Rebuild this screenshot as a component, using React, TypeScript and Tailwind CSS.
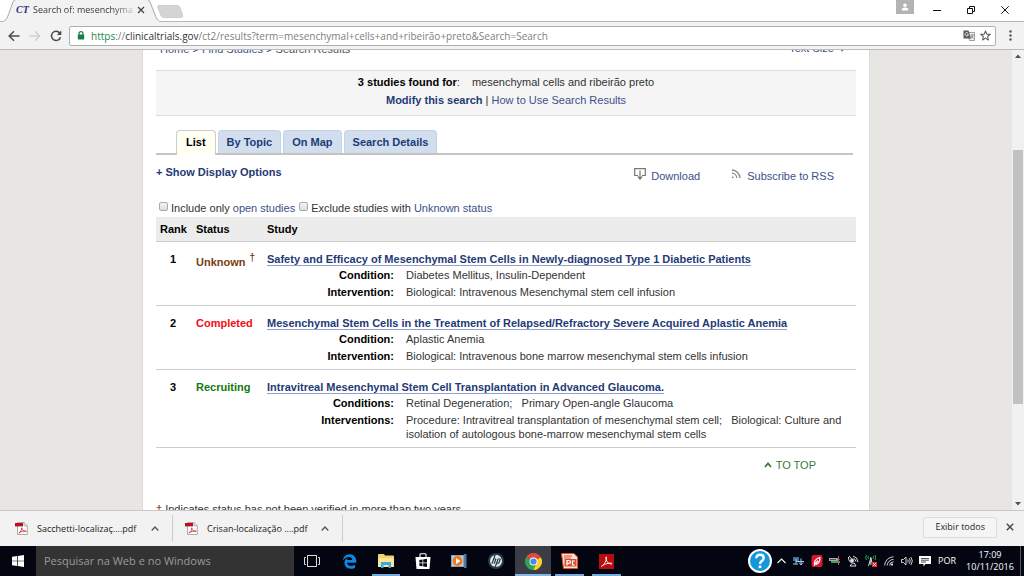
import type { ReactNode } from 'react';
import { FaEdgeLegacy } from 'react-icons/fa';
import { SiHp } from 'react-icons/si';

type Detail = { label: string; value: string };
type Study = {
  rank: number;
  status: string;
  tone: string;
  dagger?: boolean;
  title: string;
  details: Detail[];
};

const studies: Study[] = [
  {
    rank: 1,
    status: 'Unknown',
    tone: 'leading-[22px] text-[#7a4010]',
    dagger: true,
    title: 'Safety and Efficacy of Mesenchymal Stem Cells in Newly-diagnosed Type 1 Diabetic Patients',
    details: [
      { label: 'Condition:', value: 'Diabetes Mellitus, Insulin-Dependent' },
      { label: 'Intervention:', value: 'Biological: Intravenous Mesenchymal stem cell infusion' },
    ],
  },
  {
    rank: 2,
    status: 'Completed',
    tone: 'leading-4 text-[#f50a14]',
    title: 'Mesenchymal Stem Cells in the Treatment of Relapsed/Refractory Severe Acquired Aplastic Anemia',
    details: [
      { label: 'Condition:', value: 'Aplastic Anemia' },
      { label: 'Intervention:', value: 'Biological: Intravenous bone marrow mesenchymal stem cells infusion' },
    ],
  },
  {
    rank: 3,
    status: 'Recruiting',
    tone: 'leading-4 text-[#117a11]',
    title: 'Intravitreal Mesenchymal Stem Cell Transplantation in Advanced Glaucoma.',
    details: [
      { label: 'Conditions:', value: 'Retinal Degeneration;\u00a0\u00a0 Primary Open-angle Glaucoma' },
      {
        label: 'Interventions:',
        value:
          'Procedure: Intravitreal transplantation of mesenchymal stem cell;\u00a0\u00a0 Biological: Culture and isolation of autologous bone-marrow mesenchymal stem cells',
      },
    ],
  },
];

function TabStrip() {
  return (
    <header className="flex h-[22px] shrink-0 items-end border-b border-[#b8b8b8] bg-white">
      <div className="relative ml-1 flex h-[22px] w-[155px] shrink-0 items-center">
        <svg className="absolute left-0 top-0 h-[23px] w-[155px]" viewBox="0 0 155 23" aria-hidden="true">
          <path d="M0 21.5 C2 21 2.500 20 3.500 18 L9 3 Q10 .5 12 .5 H143 Q145 .5 146 3 L152 18 Q153 21 155 21.500 V23 H0 Z" fill="#f2f2f2" />
          <path d="M0 21.5 C2 21 2.500 20 3.500 18 L9 3 Q10 .5 12 .5 H143 Q145 .5 146 3 L152 18 Q153 21 155 21.500" fill="none" stroke="#a9a9a9" />
        </svg>
        <div className="relative flex w-full items-center pl-3">
          <span className="w-[17px] font-['Liberation_Serif',serif] text-[10px] font-bold italic leading-4 text-[#2a2f86]">CT</span>
          <span className="w-[100px] whitespace-nowrap bg-linear-to-r from-[#333] from-80% to-[#ccc] bg-clip-text text-[9px] leading-4 text-transparent">
            Search of: mesenchymal
          </span>
          <button type="button" aria-label="Close tab" className="flex size-4 items-center justify-center">
            <svg viewBox="0 0 8 8" className="size-2" aria-hidden="true">
              <path d="M1 1 L7 7 M7 1 L1 7" stroke="#444" strokeWidth="1.3" />
            </svg>
          </button>
        </div>
      </div>
      <button type="button" aria-label="New tab" className="-ml-[2px] mb-[3px] flex h-[13px] items-center">
        <svg viewBox="0 0 27 13" className="h-[13px] w-[27px]" aria-hidden="true">
          <path d="M1.500 .5 H20 Q22 .5 23 2.500 L25.500 10 Q26.500 12.500 24 12.500 H7 Q5 12.500 4 10.500 L.8 2.500 Q.2 .5 1.500 .5Z" fill="#d4d4d4" stroke="#cfcfcf" />
        </svg>
      </button>
      <div className="ml-auto flex h-full items-start">
        <button type="button" aria-label="User profile" className="mr-[11px] flex h-[14px] w-[18px] items-center justify-center bg-[#b3b3b3]">
          <svg viewBox="0 0 8 8" className="size-2" fill="#fff" aria-hidden="true">
            <circle cx="4" cy="2.200" r="1.800" />
            <path d="M.8 7.500 V6.500 Q.8 4.600 4 4.600 Q7.200 4.600 7.200 6.500 V7.500Z" />
          </svg>
        </button>
        <button type="button" aria-label="Minimize" className="flex h-5 w-[24px] items-center justify-center">
          <svg viewBox="0 0 8 8" className="size-2" aria-hidden="true"><path d="M0 4.500 H8" stroke="#111" /></svg>
        </button>
        <button type="button" aria-label="Restore" className="flex h-5 w-[44px] items-center justify-center">
          <svg viewBox="0 0 8 8" className="size-2" fill="none" stroke="#111" aria-hidden="true">
            <path d="M.5 2.500 H5.500 V7.500 H.5Z M2.500 2.500 V.5 H7.500 V5.500 H5.500" />
          </svg>
        </button>
        <button type="button" aria-label="Close window" className="mr-[7px] flex h-5 w-[24px] items-center justify-center">
          <svg viewBox="0 0 8 8" className="size-2" aria-hidden="true"><path d="M.3 .3 L7.700 7.700 M7.700 .3 L.3 7.700" stroke="#111" /></svg>
        </button>
      </div>
    </header>
  );
}

function Toolbar() {
  return (
    <nav aria-label="Browser" className="flex h-7 shrink-0 items-center border-b border-[#bbb] bg-[#f2f2f2] pl-[7px] pr-2">
      <button type="button" aria-label="Back" className="flex h-5 w-[14px] items-center justify-center">
        <svg viewBox="0 0 12 12" className="size-3" fill="none" stroke="#4a4a4a" strokeWidth="1.500" aria-hidden="true">
          <path d="M11.500 6 H1.500 M6 1.200 L1.200 6 L6 10.800" />
        </svg>
      </button>
      <button type="button" aria-label="Forward" className="ml-[7px] flex h-5 w-[14px] items-center justify-center">
        <svg viewBox="0 0 12 12" className="size-3" fill="none" stroke="#cfcfcf" strokeWidth="1.300" aria-hidden="true">
          <path d="M.5 6 H10.500 M6 1.200 L10.800 6 L6 10.800" />
        </svg>
      </button>
      <button type="button" aria-label="Reload" className="ml-[7px] flex h-5 w-[14px] items-center justify-center">
        <svg viewBox="0 0 12 12" className="size-3" fill="none" aria-hidden="true">
          <path d="M9.800 3.200 A4.600 4.600 0 1 0 10.500 7.200" stroke="#4a4a4a" strokeWidth="1.500" />
          <path d="M11.300 .6 V5 H6.900Z" fill="#4a4a4a" />
        </svg>
      </button>
      <div className="ml-[6px] flex h-5 min-w-0 flex-1 items-center rounded-[2px] border border-[#b0b0b0] bg-white pl-[7px] pr-[2px]">
        <svg viewBox="0 0 8 9" className="h-[9px] w-2" aria-hidden="true">
          <path d="M2 4 V2.500 Q2 .7 4 .7 Q6 .7 6 2.500 V4" fill="none" stroke="#1a7f45" strokeWidth="1.200" />
          <rect x=".8" y="3.600" width="6.400" height="5" rx=".5" fill="#1a7f45" />
        </svg>
        <p className="ml-[6px] flex-1 truncate text-[10px] leading-4 text-[#808080]">
          <span className="text-[#1a8a4a]">https</span>://<span className="text-[#333]">clinicaltrials.gov</span>
          /ct2/results?term=mesenchymal+cells+and+ribeirão+preto&amp;Search=Search
        </p>
        <button type="button" aria-label="Translate this page" className="flex size-4 items-center justify-center">
          <svg viewBox="0 0 12 11" className="h-[11px] w-3" aria-hidden="true">
            <path d="M5 2.500 H11.500 V10.500 H6.500Z" fill="#f5f5f5" stroke="#888" strokeWidth=".8" />
            <path d="M7.500 5 H10.800 M9.200 4 V5 M10.200 5.200 Q9.500 7.500 7.800 8.500 M8 6 Q9 8 10.600 8.500" fill="none" stroke="#777" strokeWidth=".8" />
            <path d="M.5 .5 H5.500 L8 8.500 H.5Z" fill="#5a5a5a" />
            <path d="M5.200 3.300 A1.700 1.700 0 1 0 5.500 4.700 H4" fill="none" stroke="#fff" strokeWidth=".8" />
          </svg>
        </button>
        <button type="button" aria-label="Bookmark this page" className="flex size-4 items-center justify-center">
          <svg viewBox="0 0 12 12" className="size-[11px]" fill="none" stroke="#555" strokeWidth="1.100" strokeLinejoin="round" aria-hidden="true">
            <path d="M6 1 L7.400 4.500 L11.200 4.700 L8.300 7.100 L9.200 10.900 L6 8.800 L2.800 10.900 L3.700 7.100 L.8 4.700 L4.600 4.500Z" />
          </svg>
        </button>
      </div>
      <button type="button" aria-label="Menu" className="ml-2 flex h-5 w-3 items-center justify-center">
        <svg viewBox="0 0 3 11" className="h-[11px] w-[3px]" fill="#555" aria-hidden="true">
          <circle cx="1.500" cy="1.500" r="1.200" /><circle cx="1.500" cy="5.500" r="1.200" /><circle cx="1.500" cy="9.500" r="1.200" />
        </svg>
      </button>
    </nav>
  );
}

function StudyRow({ study }: { study: Study }) {
  return (
    <tr className="border-b border-[#ccc] align-top">
      <td className="pr-[6px] pt-[9px] text-center font-bold leading-4 text-black">{study.rank}</td>
      <td className={`pt-[9px] font-bold ${study.tone}`}>
        {study.status}
        {study.dagger && <sup className="ml-1 text-[10px]">†</sup>}
      </td>
      <td className="pb-[6px] pt-[9px]">
        <h2 className="leading-4">
          <a href="#study" className="border-b border-[#8fa3cc] font-bold text-[#1f3a76]">{study.title}</a>
        </h2>
        <dl className="mt-px grid grid-cols-[127px_1fr] gap-x-3 gap-y-[3px] pr-2 leading-[14px]">
          {study.details.map((d) => (
            <div key={d.label} className="contents">
              <dt className="text-right font-bold text-black">{d.label}</dt>
              <dd>{d.value}</dd>
            </div>
          ))}
        </dl>
      </td>
    </tr>
  );
}

function ResultsPage() {
  const link = 'text-[#3d4f8a]';
  const tab = 'flex h-[23px] items-center rounded-t border border-b-0 border-[#c5d3e4] bg-[#d0deee] px-2 font-bold text-[#1f3a76]';
  const checkbox = 'mb-[3px] size-[9px] appearance-none rounded-[2px] border border-[#aaa] bg-linear-to-b from-[#f4f4f4] to-[#ddd]';
  return (
    <div className="mx-auto w-full max-w-[728px] border-x border-[#dcdcda] bg-white px-[13px] font-['Liberation_Sans',Arial,sans-serif] text-[11px] text-[#333]">
      <div className="-mt-[9px] flex h-4 items-center justify-between pl-1 pr-3 leading-4">
        <p className={link}>
          <a href="#home">Home</a> &gt; <a href="#find">Find Studies</a> &gt; <span className="text-[#555]">Search Results</span>
        </p>
        <a href="#text-size" className={link}>Text Size&nbsp; <span className="text-[8px]">▾</span></a>
      </div>

      <section className="mt-[13px] border-y border-[#dedede] bg-[#f5f5f5] pb-[6px] pt-[2px] text-center leading-[18px]">
        <p><b className="text-black">3 studies found for</b>:<span className="ml-3">mesenchymal cells and ribeirão preto</span></p>
        <p>
          <a href="#modify" className="font-bold text-[#1f3a76]">Modify this search</a> | <a href="#how" className={link}>How to Use Search Results</a>
        </p>
      </section>

      <nav aria-label="Result views" className="mr-[3px] mt-[14px] flex gap-[2px] border-b-2 border-[#c4c4c4] pl-5">
        <a href="#list" className="-mb-[2px] flex h-[25px] items-center rounded-t border border-b-0 border-[#ccc] bg-[#fffff3] px-[9px] pb-[2px] font-bold text-black">List</a>
        <a href="#topic" className={tab}>By Topic</a>
        <a href="#map" className={tab}>On Map</a>
        <a href="#details" className={tab}>Search Details</a>
      </nav>

      <div className="flex h-[45px] items-start justify-between pr-[22px] leading-4">
        <button type="button" className="mt-[9px] font-bold text-[#1f3a76]">+ Show Display Options</button>
        <div className="mt-[13px] flex gap-[31px]">
          <a href="#download" className={`flex items-center gap-[5px] ${link}`}>
            <svg viewBox="0 0 12 12" className="-mt-1 size-3" fill="none" stroke="#777" strokeWidth="1.200" aria-hidden="true">
              <path d="M4 7.500 H.7 V.7 H11.300 V7.500 H8 M6 2.500 V10.500 M3.800 8.500 L6 11 L8.200 8.500" />
            </svg>
            Download
          </a>
          <a href="#rss" className={`flex items-center gap-[6px] ${link}`}>
            <svg viewBox="0 0 10 10" className="-mt-1 size-[10px]" fill="none" stroke="#888" strokeWidth="1.300" aria-hidden="true">
              <circle cx="1.700" cy="8.300" r=".9" fill="#888" stroke="none" />
              <path d="M1 4.200 A5 5 0 0 1 5.800 9 M1 1 A8.300 8.300 0 0 1 9 9" />
            </svg>
            Subscribe to RSS
          </a>
        </div>
      </div>

      <div className="flex h-[17px] items-center gap-1 pb-[2px] pl-[3px] leading-4">
        <div className="flex items-center gap-[3px]">
          <input id="open-only" type="checkbox" className={checkbox} />
          <label htmlFor="open-only">Include only <a href="#open" className={link}>open studies</a></label>
        </div>
        <div className="flex items-center gap-[3px]">
          <input id="no-unknown" type="checkbox" className={checkbox} />
          <label htmlFor="no-unknown">Exclude studies with <a href="#unknown" className={link}>Unknown status</a></label>
        </div>
      </div>

      <table className="w-full table-fixed border-collapse text-left">
        <colgroup>
          <col className="w-[40px]" />
          <col className="w-[71px]" />
          <col />
        </colgroup>
        <thead>
          <tr className="h-6 border-b border-[#ccc] bg-[#ececec] leading-4 text-black">
            <th className="pl-1">Rank</th>
            <th>Status</th>
            <th>Study</th>
          </tr>
        </thead>
        <tbody>
          {studies.map((s) => <StudyRow key={s.rank} study={s} />)}
        </tbody>
      </table>

      <div className="mt-[9px] flex justify-end pr-10 leading-4">
        <a href="#top" className="flex items-center gap-1 text-[#3a7a3a]">
          <svg viewBox="0 0 8 6" className="h-[6px] w-2" fill="none" stroke="#3a7a3a" strokeWidth="1.800" aria-hidden="true"><path d="M1 5 L4 1.500 L7 5" /></svg>
          TO TOP
        </a>
      </div>
      <p className="mt-7 leading-4"><span className="text-[#7a4010]">†</span> Indicates status has not been verified in more than two years</p>
    </div>
  );
}

function Scrollbar() {
  return (
    <div className="flex w-3 shrink-0 flex-col items-center bg-[#f1f1f1] py-1" aria-hidden="true">
      <svg viewBox="0 0 6 4" className="h-1 w-[6px] shrink-0" fill="#505050"><path d="M0 4 L3 .5 L6 4Z" /></svg>
      <div className="flex w-[10px] flex-1 flex-col">
        <div className="flex-[92]" />
        <div className="flex-[254] bg-[#c1c1c1]" />
        <div className="flex-[98]" />
      </div>
      <svg viewBox="0 0 6 4" className="h-1 w-[6px] shrink-0" fill="#505050"><path d="M0 0 L3 3.500 L6 0Z" /></svg>
    </div>
  );
}

function DownloadItem({ name }: { name: string }) {
  return (
    <div className="flex w-[170px] items-center border-r border-[#ccc] pl-3">
      <svg viewBox="0 0 13 13" className="size-[13px] shrink-0" aria-hidden="true">
        <path d="M2.500 .5 H9 L12.300 3.800 V12.500 H2.500Z" fill="#fff" stroke="#999" strokeWidth=".8" />
        <path d="M9 .5 V3.800 H12.300" fill="none" stroke="#999" strokeWidth=".8" />
        <rect x="0" y="1" width="8" height="3.400" fill="#b3141c" />
        <path d="M3.800 11 C6 9.500 7 7.500 6.800 5.800 C6.500 8 9 9.500 11.300 9.300 C9 8.600 6 9.500 3.800 11Z" fill="none" stroke="#d3303a" strokeWidth=".9" />
      </svg>
      <a href="#file" className="ml-[9px] w-[110px] whitespace-nowrap text-[9px] leading-4 text-[#222]">{name}</a>
      <button type="button" aria-label={`Options for ${name}`} className="flex h-6 w-4 items-center justify-center">
        <svg viewBox="0 0 8 5" className="h-[5px] w-2" fill="none" stroke="#555" strokeWidth="1.300" aria-hidden="true"><path d="M.7 4.500 L4 1 L7.300 4.500" /></svg>
      </button>
    </div>
  );
}

function DownloadBar() {
  return (
    <footer className="flex h-9 shrink-0 items-stretch border-t border-[#c8c8c8] bg-[#f2f2f2] py-1 pl-[3px] pr-[6px]">
      <DownloadItem name="Sacchetti-localizaç....pdf" />
      <DownloadItem name="Crisan-localização ....pdf" />
      <div className="mb-[3px] ml-auto flex items-center gap-[5px]">
        <button type="button" className="h-[21px] rounded-[2px] border border-[#ddd] bg-[#f5f5f5] px-[11px] text-[9px] leading-4 text-[#222]">Exibir todos</button>
        <button type="button" aria-label="Close downloads" className="flex size-4 items-center justify-center">
          <svg viewBox="0 0 8 8" className="size-2" aria-hidden="true"><path d="M.8 .8 L7.200 7.200 M7.200 .8 L.8 7.200" stroke="#444" strokeWidth="1.400" /></svg>
        </button>
      </div>
    </footer>
  );
}

function TaskButton({ label, state = 'idle', children }: { label: string; state?: 'idle' | 'open' | 'active'; children: ReactNode }) {
  const look = {
    idle: '',
    open: 'after:absolute after:inset-x-1 after:bottom-0 after:h-[2px] after:bg-[#76a9dc]',
    active: 'bg-[#3a3d46] after:absolute after:inset-x-0 after:bottom-0 after:h-[2px] after:bg-[#86b6e6]',
  }[state];
  return (
    <button type="button" aria-label={label} className={`relative flex items-center justify-center ${look}`}>
      {children}
    </button>
  );
}

function TrayIcon({ children }: { children: ReactNode }) {
  return <span className="flex w-[18px] items-center justify-center">{children}</span>;
}

function Taskbar() {
  return (
    <footer className="flex h-[30px] shrink-0 items-stretch bg-[#030611] text-white">
      <button type="button" aria-label="Start" className="flex w-9 items-center justify-center">
        <svg viewBox="0 0 12 12" className="size-3" fill="#fff" aria-hidden="true">
          <path d="M0 1.700 L5.200 1 V5.700 H0Z M5.900 .9 L12 0 V5.700 H5.900Z M0 6.300 H5.200 V11 L0 10.300Z M5.900 6.300 H12 V12 L5.900 11.100Z" />
        </svg>
      </button>
      <input aria-label="Pesquisar na Web e no Windows" placeholder="Pesquisar na Web e no Windows" className="w-[258px] bg-[#333334] px-2 text-[11px] text-white placeholder:text-[#9a9a9a]" />
      <div className="grid w-[331px] grid-cols-9">
        <TaskButton label="Task view">
          <svg viewBox="0 0 16 12" className="h-3 w-4" fill="none" stroke="#ddd" aria-hidden="true">
            <path d="M3.500 .5 H12.500 V11.500 H3.500Z M2 2.500 H.5 V9.500 H2 M14 2.500 H15.500 V9.500 H14" />
          </svg>
        </TaskButton>
        <TaskButton label="Edge"><FaEdgeLegacy className="size-[15px] text-[#0f86e0]" /></TaskButton>
        <TaskButton label="File Explorer" state="open">
          <svg viewBox="0 0 16 14" className="h-[14px] w-4" aria-hidden="true">
            <path d="M0 1 Q0 0 1 0 H6 L7 1.500 H15 Q16 1.500 16 2.500 V13 H0Z" fill="#f2d06a" />
            <path d="M0 4 H16 V13 H0Z" fill="#fbe596" />
            <path d="M3 14 V8 H13 V14 H10.500 V11 H5.500 V14Z" fill="#3aa8e0" />
          </svg>
        </TaskButton>
        <TaskButton label="Store">
          <svg viewBox="0 0 16 16" className="size-4" aria-hidden="true">
            <path d="M5 4.500 V1.500 Q5 .7 6 .7 H10 Q11 .7 11 1.500 V4.500" fill="none" stroke="#fff" strokeWidth="1.100" />
            <path d="M.5 4 H15.500 L14.500 16 H1.500Z" fill="#fff" />
            <path d="M4.300 7 L7.500 6.500 V9.600 H4.300Z M8.200 6.400 L12 5.800 V9.600 H8.200Z M4.300 10.200 H7.500 V13.300 L4.300 12.800Z M8.200 10.200 H12 V14 L8.200 13.400Z" fill="#030611" />
          </svg>
        </TaskButton>
        <TaskButton label="Media Player">
          <svg viewBox="0 0 16 14" className="h-[14px] w-4" aria-hidden="true">
            <rect x="0" y="1" width="13" height="12" fill="#7fa6c4" />
            <path d="M13 0 H15.500 V14 H13Z" fill="#4a7ba6" />
            <rect x="1" y="2" width="11" height="10" fill="#b9cfdf" />
            <circle cx="6.500" cy="7" r="5" fill="#ee7a1d" />
            <path d="M5 4 L9.500 7 L5 10Z" fill="#fff" />
          </svg>
        </TaskButton>
        <TaskButton label="HP"><span className="flex size-4 items-center justify-center rounded-full bg-[#2a3a46]"><SiHp className="size-3 text-[#dfe6ea]" /></span></TaskButton>
        <TaskButton label="Chrome" state="active">
          <svg viewBox="0 0 18 18" className="size-[17px]" aria-hidden="true">
            <path d="M9 9 L1.200 4.500 A9 9 0 0 1 16.800 4.500Z" fill="#e04a3a" />
            <path d="M9 9 L16.800 4.500 A9 9 0 0 1 9 18Z" fill="#fbd023" />
            <path d="M9 9 L9 18 A9 9 0 0 1 1.200 4.500Z" fill="#2fa455" />
            <path d="M9 5 H17 L16.800 4.500 H9Z" fill="#e04a3a" />
            <path d="M5.500 11 L9 18 L12.500 11Z" fill="#2fa455" />
            <path d="M12.500 11 L9 18 L12 17.500 L16 10Z" fill="#fbd023" />
            <circle cx="9" cy="9" r="4.200" fill="#fff" />
            <circle cx="9" cy="9" r="3.300" fill="#4788ee" />
          </svg>
        </TaskButton>
        <TaskButton label="PowerPoint" state="open">
          <svg viewBox="0 0 17 16" className="h-4 w-[17px]" fill="none" aria-hidden="true">
            <path d="M.5 .5 H13 L16.500 4 V15.500 H2.500Z" fill="#f7e2d6" stroke="#d9512c" />
            <path d="M3 3 H11 M3 5 H10" stroke="#d9512c" strokeWidth="1.200" />
            <rect x="3.500" y="6" width="12" height="7.500" fill="#d9512c" />
            <path d="M6 12.500 V7.500 H8 Q9.500 7.500 9.500 9 Q9.500 10.300 8 10.300 H6 M13.800 8 H11.500 V12 H13.800" stroke="#fff" strokeWidth="1.200" />
          </svg>
        </TaskButton>
        <TaskButton label="Adobe Reader" state="open">
          <svg viewBox="0 0 15 15" className="size-[15px]" aria-hidden="true">
            <rect width="15" height="15" fill="#b80d10" />
            <path d="M2.500 12.300 C5.500 10.500 8 6 7.300 2.800 C6.500 2.800 7 7 9 8.800 C10.500 10 12.800 10.500 12.900 9.500 C12.800 8.500 6 9.200 2.500 12.300Z" fill="none" stroke="#fff" strokeWidth=".9" />
          </svg>
        </TaskButton>
      </div>

      <div className="ml-auto flex items-stretch">
        <span className="flex w-6 items-center justify-center">
          <svg viewBox="0 0 24 24" className="size-6" aria-hidden="true">
            <circle cx="12" cy="12" r="11" fill="#1597dc" stroke="#fff" strokeWidth="2" />
            <path d="M8.300 9.200 Q8.500 5.800 12 5.800 Q15.700 5.800 15.700 9 Q15.700 10.800 13.800 12 Q12 13.200 12 15" fill="none" stroke="#fff" strokeWidth="2.400" />
            <rect x="10.700" y="16.500" width="2.600" height="2.600" fill="#fff" />
          </svg>
        </span>
        <TrayIcon>
          <svg viewBox="0 0 9 6" className="h-[6px] w-[9px]" fill="none" stroke="#eee" strokeWidth="1.200" aria-hidden="true"><path d="M.5 5 L4.500 1 L8.500 5" /></svg>
        </TrayIcon>
        <TrayIcon>
          <svg viewBox="0 0 12 10" className="h-[10px] w-3" aria-hidden="true">
            <path d="M0 1 H6 V5 H0Z M0 7 H5 V9 H0Z" fill="#3d6f9e" />
            <path d="M3 3 V8 M3 5.500 H11 M8 2.500 V8 M6 6.500 L8 9 L10 6.500" fill="none" stroke="#a9cdea" />
          </svg>
        </TrayIcon>
        <TrayIcon>
          <svg viewBox="0 0 12 12" className="size-3" aria-hidden="true">
            <rect x=".5" width="11" height="12" rx="2" fill="#e0122d" />
            <path d="M3.500 9 Q2.800 4.500 8.800 2.500 Q9.500 8 5 9.500 M3 10.500 L7 5.500" fill="none" stroke="#fff" strokeWidth="1.300" />
          </svg>
        </TrayIcon>
        <TrayIcon>
          <svg viewBox="0 0 12 10" className="h-[10px] w-3" aria-hidden="true">
            <path d="M0 2 H8 L11 3.500 L8 5 H0Z" fill="#a9a9a0" /><path d="M2 5 H11 V7 H2Z" fill="#3f9a65" />
            <path d="M9.500 0 V9" stroke="#d8513c" /><path d="M1 3.500 H7" stroke="#555" />
          </svg>
        </TrayIcon>
        <TrayIcon>
          <svg viewBox="0 0 12 12" className="size-3" fill="none" stroke="#ddd" aria-hidden="true">
            <path d="M2 1 L7 6.500 M1.500 2 Q1 8 8 8.500 M5 8.500 L3 11 H9 L7.500 8.500 M6 1 Q10.500 2 11 7 M6.500 3.500 Q8.500 4 9 6.500" />
            <circle cx="5" cy="5.500" r="1.500" fill="#ddd" />
          </svg>
        </TrayIcon>
        <TrayIcon>
          <svg viewBox="0 0 12 12" className="size-3" fill="none" aria-hidden="true">
            <path d="M1.500 0 Q0 2.500 1.500 5 M3.500 1 Q2.500 2.500 3.500 4 M10 0 Q11.500 2.500 10 5 M8 1 Q9 2.500 8 4" stroke="#25b04c" />
            <path d="M5.800 2 V10 M3.500 11 L5.800 3 L8 11" stroke="#ddd" />
            <rect x="7" y="7" width="5" height="5" fill="#e2242b" /><path d="M8 8 L11 11 M11 8 L8 11" stroke="#fff" strokeWidth=".8" />
          </svg>
        </TrayIcon>
        <TrayIcon>
          <svg viewBox="0 0 10 10" className="size-[10px]" fill="none" stroke="#ccc" aria-hidden="true">
            <circle cx="8" cy="8.500" r="1" fill="#fff" stroke="none" />
            <path d="M.6 9.500 A9 9 0 0 1 9.500 .8 M3.200 9.500 A6.400 6.400 0 0 1 9.500 3.400 M5.600 9.500 A4 4 0 0 1 9.500 5.800" />
          </svg>
        </TrayIcon>
        <TrayIcon>
          <svg viewBox="0 0 12 10" className="h-[10px] w-3" fill="none" stroke="#e5e5e5" strokeWidth=".9" aria-hidden="true">
            <path d="M.5 3.500 H2.500 L5 1 V9 L2.500 6.500 H.5Z M6.700 3.500 Q7.700 5 6.700 6.500 M8.300 2.200 Q10.200 5 8.300 7.800 M9.900 1 Q12.800 5 9.900 9" />
          </svg>
        </TrayIcon>
        <TrayIcon>
          <svg viewBox="0 0 12 12" className="size-3" aria-hidden="true">
            <path d="M0 1 H12 V9 H6.500 L4.500 11.500 V9 H0Z" fill="#fff" /><path d="M2 3.500 H10 M2 5.200 H10 M2 7 H7" stroke="#222" strokeWidth=".8" />
          </svg>
        </TrayIcon>
        <span className="flex w-[26px] items-center justify-center text-[9px]">POR</span>
        <time className="flex w-[60px] flex-col justify-center text-center text-[9px] leading-3">
          <span>17:09</span>
          <span>10/11/2016</span>
        </time>
        <span className="mr-[3px] w-px bg-[#555]" />
      </div>
    </footer>
  );
}

export default function App() {
  return (
    <div className="flex h-screen flex-col overflow-hidden bg-white font-['Open_Sans','Noto_Sans',sans-serif]">
      <TabStrip />
      <Toolbar />
      <div className="flex min-h-0 flex-1">
        <main className="flex min-w-0 flex-1 overflow-hidden bg-[#e7e6e2]">
          <ResultsPage />
        </main>
        <Scrollbar />
      </div>
      <DownloadBar />
      <Taskbar />
    </div>
  );
}
